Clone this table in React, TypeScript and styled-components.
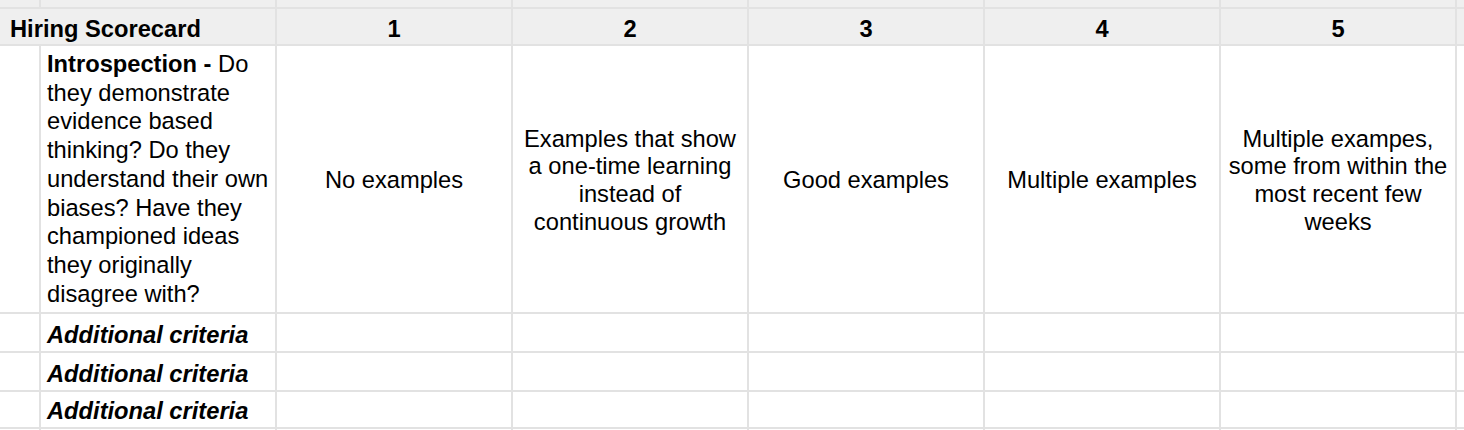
import React from "react";
import styled, { createGlobalStyle } from "styled-components";

const Global = createGlobalStyle`
  html, body { margin: 0; padding: 0; background: #ffffff; }
  body { overflow: hidden; font-family: "Liberation Sans", Arial, sans-serif; }
`;

const Sheet = styled.div`
  display: grid;
  grid-template-columns: 39px repeat(6, 234px) 7px;
  grid-template-rows: 7px 35px 266px 37px 37px 35px 10px;
  gap: 2px;
  background: #e2e2e2;
  width: 1464px;
  height: 430px;
  overflow: hidden;
  font-family: "Liberation Sans", Arial, sans-serif;
  font-size: 23.7px;
  color: #000;
`;

const Cell = styled.div<{ $gray?: boolean; $span?: number }>`
  background: ${(p) => (p.$gray ? "#efefef" : "#ffffff")};
  grid-column: ${(p) => (p.$span ? `span ${p.$span}` : "auto")};
  box-sizing: border-box;
  min-width: 0;
`;

const HeadCell = styled(Cell)<{ $left?: boolean }>`
  display: flex;
  align-items: flex-end;
  justify-content: ${(p) => (p.$left ? "flex-start" : "center")};
  padding: 0 0 1px ${(p) => (p.$left ? "10px" : "0")};
  font-weight: bold;
  line-height: 27px;
  white-space: nowrap;
`;

const CriteriaCell = styled(Cell)`
  padding: 4px 4px 0 6px;
  line-height: 28.7px;
`;

const Strong = styled.b`
  font-weight: bold;
`;

const ScoreCell = styled(Cell)`
  display: flex;
  align-items: center;
  justify-content: center;
  text-align: center;
  padding: 4px 6px 0;
  line-height: 27.6px;
`;

const ExtraCell = styled(Cell)`
  display: flex;
  align-items: flex-end;
  padding: 0 4px 2px 6px;
  font-weight: bold;
  font-style: italic;
  line-height: 27px;
  white-space: nowrap;
`;

const scores = [
  "No examples",
  "Examples that show a one-time learning instead of continuous growth",
  "Good examples",
  "Multiple examples",
  "Multiple exampes, some from within the most recent few weeks",
];

const blanks = (n: number, gray = false, prefix = "b") =>
  Array.from({ length: n }, (_, i) => <Cell key={`${prefix}${i}`} $gray={gray} />);

export default function App() {
  return (
    <>
      <Global />
      <Sheet>
        {blanks(8, true, "top")}

        <HeadCell $gray $span={2} $left>
          Hiring Scorecard
        </HeadCell>
        {[1, 2, 3, 4, 5].map((n) => (
          <HeadCell key={n} $gray>
            {n}
          </HeadCell>
        ))}
        <Cell $gray />

        <Cell />
        <CriteriaCell>
          <Strong>Introspection -</Strong> Do they demonstrate evidence based thinking? Do they
          understand their own biases? Have they championed ideas they originally disagree with?
        </CriteriaCell>
        {scores.map((s) => (
          <ScoreCell key={s}>{s}</ScoreCell>
        ))}
        <Cell />

        {[0, 1, 2].map((r) => (
          <React.Fragment key={r}>
            <Cell />
            <ExtraCell>Additional criteria</ExtraCell>
            {blanks(6, false, `r${r}-`)}
          </React.Fragment>
        ))}

        {blanks(8, false, "bottom")}
      </Sheet>
    </>
  );
}
